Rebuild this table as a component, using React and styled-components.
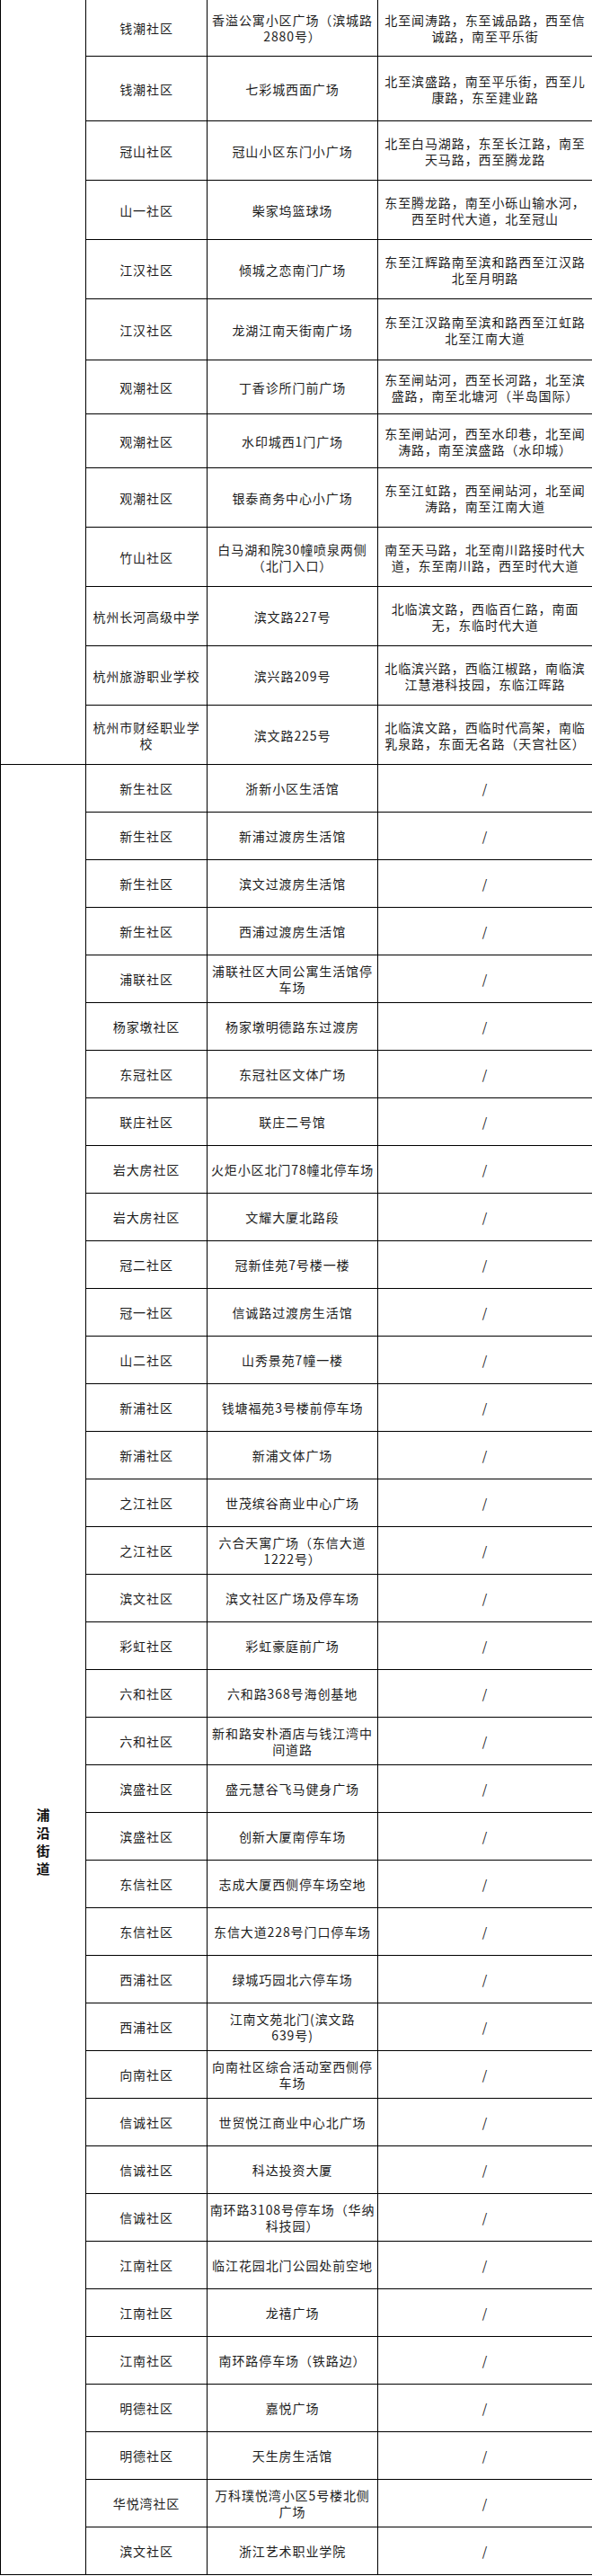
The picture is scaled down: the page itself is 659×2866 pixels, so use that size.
import React from "react";
import styled, { createGlobalStyle } from "styled-components";

const GlobalStyle = createGlobalStyle`
  body {
    margin: 0;
    background: #ffffff;
    font-family: "Noto Sans CJK SC", "Liberation Sans", sans-serif;
  }
`;

// table frame
const Sheet = styled.table`
  width: 659px;
  border-collapse: collapse;
  table-layout: fixed;
  margin-top: -1px;
  color: #1c1c1c;
  font-size: 14px;
  line-height: 18px;
  letter-spacing: 0.9px;
`;

const Row = styled.tr`
  height: ${(p) => p.$h}px;
`;

const Cell = styled.td`
  border: 1px solid #000;
  padding: 0 2px;
  text-align: center;
  vertical-align: middle;
`;

const StreetCell = styled.td`
  border: 1px solid #000;
  padding: ${(p) => p.$top || 0}px 0 0;
  text-align: center;
  vertical-align: top;
`;

const StreetName = styled.div`
  font-weight: 700;
  font-size: 15px;
  line-height: 20px;
  letter-spacing: 0;
  color: #111;
`;

const Line = styled.span`
  display: block;
  white-space: nowrap;
`;

// rows above 浦沿街道 (the street cell continues from above the picture)
const upperRows = [
  { h: 63, c: ["钱潮社区"], p: ["香溢公寓小区广场（滨城路", "2880号）"], b: ["北至闻涛路，东至诚品路，西至信", "诚路，南至平乐街"] },
  { h: 72, c: ["钱潮社区"], p: ["七彩城西面广场"], b: ["北至滨盛路，南至平乐街，西至儿", "康路，东至建业路"] },
  { h: 66, c: ["冠山社区"], p: ["冠山小区东门小广场"], b: ["北至白马湖路，东至长江路，南至", "天马路，西至腾龙路"] },
  { h: 66, c: ["山一社区"], p: ["柴家坞篮球场"], b: ["东至腾龙路，南至小砾山输水河，", "西至时代大道，北至冠山"] },
  { h: 66, c: ["江汉社区"], p: ["倾城之恋南门广场"], b: ["东至江辉路南至滨和路西至江汉路", "北至月明路"] },
  { h: 68, c: ["江汉社区"], p: ["龙湖江南天街南广场"], b: ["东至江汉路南至滨和路西至江虹路", "北至江南大道"] },
  { h: 60, c: ["观潮社区"], p: ["丁香诊所门前广场"], b: ["东至闸站河，西至长河路，北至滨", "盛路，南至北塘河（半岛国际）"] },
  { h: 60, c: ["观潮社区"], p: ["水印城西1门广场"], b: ["东至闸站河，西至水印巷，北至闻", "涛路，南至滨盛路（水印城）"] },
  { h: 66, c: ["观潮社区"], p: ["银泰商务中心小广场"], b: ["东至江虹路，西至闸站河，北至闻", "涛路，南至江南大道"] },
  { h: 66, c: ["竹山社区"], p: ["白马湖和院30幢喷泉两侧", "（北门入口）"], b: ["南至天马路，北至南川路接时代大", "道，东至南川路，西至时代大道"] },
  { h: 66, c: ["杭州长河高级中学"], p: ["滨文路227号"], b: ["北临滨文路，西临百仁路，南面", "无，东临时代大道"] },
  { h: 66, c: ["杭州旅游职业学校"], p: ["滨兴路209号"], b: ["北临滨兴路，西临江椒路，南临滨", "江慧港科技园，东临江晖路"] },
  { h: 66, c: ["杭州市财经职业学", "校"], p: ["滨文路225号"], b: ["北临滨文路，西临时代高架，南临", "乳泉路，东面无名路（天宫社区）"] },
];

// 浦沿街道 rows
const lowerRows = [
  ["新生社区", ["浙新小区生活馆"]],
  ["新生社区", ["新浦过渡房生活馆"]],
  ["新生社区", ["滨文过渡房生活馆"]],
  ["新生社区", ["西浦过渡房生活馆"]],
  ["浦联社区", ["浦联社区大同公寓生活馆停", "车场"]],
  ["杨家墩社区", ["杨家墩明德路东过渡房"]],
  ["东冠社区", ["东冠社区文体广场"]],
  ["联庄社区", ["联庄二号馆"]],
  ["岩大房社区", ["火炬小区北门78幢北停车场"]],
  ["岩大房社区", ["文耀大厦北路段"]],
  ["冠二社区", ["冠新佳苑7号楼一楼"]],
  ["冠一社区", ["信诚路过渡房生活馆"]],
  ["山二社区", ["山秀景苑7幢一楼"]],
  ["新浦社区", ["钱塘福苑3号楼前停车场"]],
  ["新浦社区", ["新浦文体广场"]],
  ["之江社区", ["世茂缤谷商业中心广场"]],
  ["之江社区", ["六合天寓广场（东信大道", "1222号）"]],
  ["滨文社区", ["滨文社区广场及停车场"]],
  ["彩虹社区", ["彩虹豪庭前广场"]],
  ["六和社区", ["六和路368号海创基地"]],
  ["六和社区", ["新和路安朴酒店与钱江湾中", "间道路"]],
  ["滨盛社区", ["盛元慧谷飞马健身广场"]],
  ["滨盛社区", ["创新大厦南停车场"]],
  ["东信社区", ["志成大厦西侧停车场空地"]],
  ["东信社区", ["东信大道228号门口停车场"]],
  ["西浦社区", ["绿城巧园北六停车场"]],
  ["西浦社区", ["江南文苑北门(滨文路", "639号)"]],
  ["向南社区", ["向南社区综合活动室西侧停", "车场"]],
  ["信诚社区", ["世贸悦江商业中心北广场"]],
  ["信诚社区", ["科达投资大厦"]],
  ["信诚社区", ["南环路3108号停车场（华纳", "科技园）"]],
  ["江南社区", ["临江花园北门公园处前空地"]],
  ["江南社区", ["龙禧广场"]],
  ["江南社区", ["南环路停车场（铁路边）"]],
  ["明德社区", ["嘉悦广场"]],
  ["明德社区", ["天生房生活馆"]],
  ["华悦湾社区", ["万科璞悦湾小区5号楼北侧", "广场"]],
  ["滨文社区", ["浙江艺术职业学院"]],
];

const Lines = ({ items }) => (
  <>
    {items.map((t, i) => (
      <Line key={i}>{t}</Line>
    ))}
  </>
);

function App() {
  return (
    <>
      <GlobalStyle />
      <Sheet>
        <colgroup>
          <col style={{ width: 95 }} />
          <col style={{ width: 135 }} />
          <col style={{ width: 190 }} />
          <col style={{ width: 239 }} />
        </colgroup>
        <tbody>
          {upperRows.map((r, i) => (
            <Row $h={r.h} key={"u" + i}>
              {i === 0 && <StreetCell rowSpan={upperRows.length} />}
              <Cell>
                <Lines items={r.c} />
              </Cell>
              <Cell>
                <Lines items={r.p} />
              </Cell>
              <Cell>
                <Lines items={r.b} />
              </Cell>
            </Row>
          ))}
          {lowerRows.map(([community, place], i) => (
            <Row $h={53} key={"l" + i}>
              {i === 0 && (
                <StreetCell rowSpan={lowerRows.length} $top={1158}>
                  {"浦沿街道".split("").map((ch) => (
                    <StreetName key={ch}>{ch}</StreetName>
                  ))}
                </StreetCell>
              )}
              <Cell>
                <Lines items={[community]} />
              </Cell>
              <Cell>
                <Lines items={place} />
              </Cell>
              <Cell>/</Cell>
            </Row>
          ))}
        </tbody>
      </Sheet>
    </>
  );
}

export default App;
